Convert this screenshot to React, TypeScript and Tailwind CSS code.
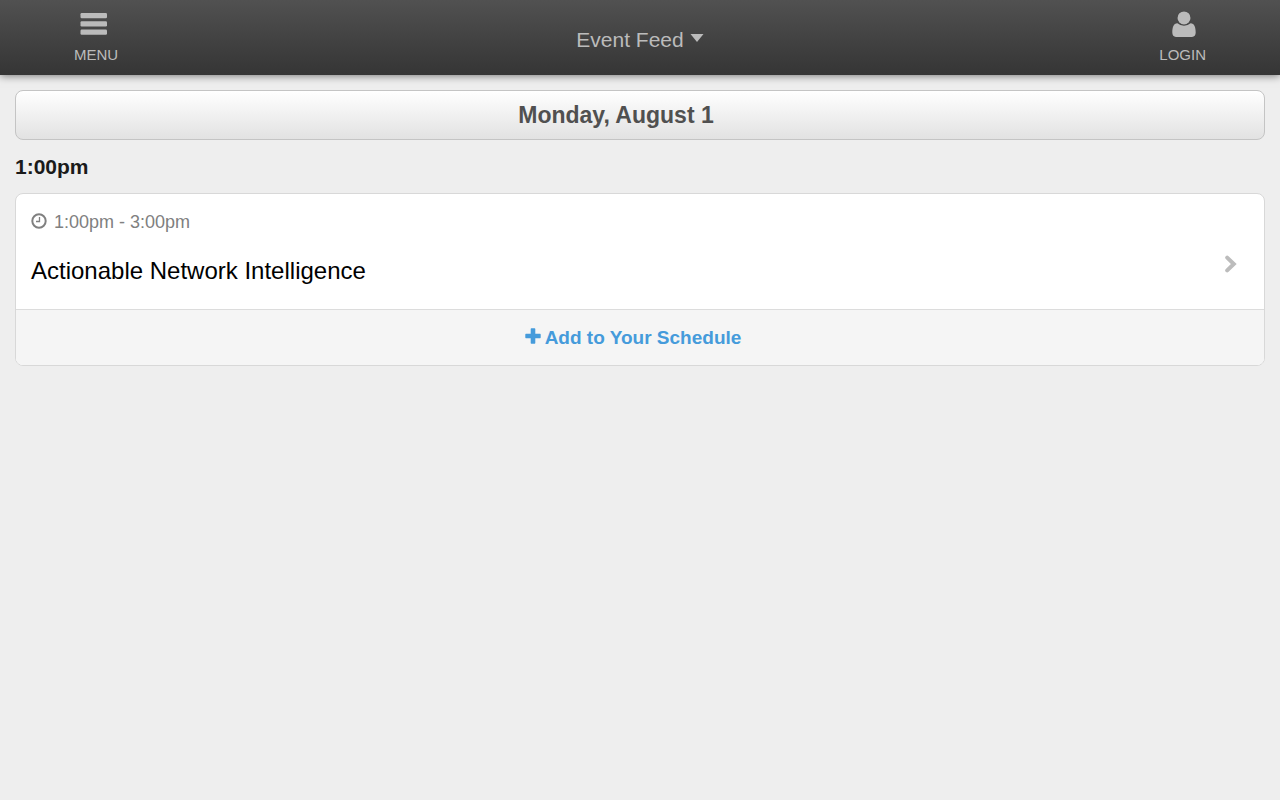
import React from "react";

function BarsIcon() {
  return (
    <svg width="28" height="24" viewBox="0 0 28 24" fill="currentColor" aria-hidden="true">
      <rect x="0.5" y="1" width="26.5" height="5.2" rx="1.2" />
      <rect x="0.5" y="9.3" width="26.5" height="5.2" rx="1.2" />
      <rect x="0.5" y="17.6" width="26.5" height="5.2" rx="1.2" />
    </svg>
  );
}

function UserIcon() {
  return (
    <svg width="24" height="27" viewBox="0 0 24 27" fill="currentColor" aria-hidden="true">
      <path d="M5.4 12.3Q8 14.7 12 14.7T18.6 12.3C22.4 12.3 23.7 16.5 23.7 21.500C23.7 24.300 22.4 25.9 20 25.9H4C1.6 25.9 0.3 24.300 0.3 21.500C0.3 16.5 1.6 12.3 5.4 12.3Z" />
      <circle cx="12" cy="7" r="7" fill="#474747" />
      <circle cx="12" cy="6.900" r="6.500" />
    </svg>
  );
}

function ClockIcon() {
  return (
    <svg width="16" height="16" viewBox="0 0 16 16" fill="none" stroke="currentColor" aria-hidden="true">
      <circle cx="8" cy="8" r="6.700" strokeWidth="2" />
      <path d="M8.500 4V8.500H5" strokeWidth="1.300" />
    </svg>
  );
}

function ChevronIcon() {
  return (
    <svg
      width="14"
      height="18"
      viewBox="0 0 14 18"
      fill="none"
      stroke="currentColor"
      strokeWidth="4"
      strokeLinecap="round"
      aria-hidden="true"
    >
      <path d="M3.200 2.600L9.800 9L3.200 15.400" />
    </svg>
  );
}

function PlusIcon() {
  return (
    <svg width="16" height="16" viewBox="0 0 16 16" fill="currentColor" aria-hidden="true">
      <path d="M6.400 0.300H9.600Q10.300 0.300 10.300 1V5.700H15Q15.700 5.700 15.700 6.400V9.600Q15.700 10.300 15 10.300H10.300V15Q10.300 15.700 9.600 15.700H6.400Q5.700 15.700 5.700 15V10.300H1Q0.300 10.300 0.300 9.600V6.400Q0.300 5.700 1 5.700H5.700V1Q5.700 0.300 6.400 0.300Z" />
    </svg>
  );
}

export default function App() {
  return (
    <div className="min-h-screen bg-[#eeeeee] font-['Liberation_Sans',Arial,sans-serif] text-black">
      <header className="flex h-[75px] items-start justify-between bg-linear-to-b from-[#515151] to-[#353535] px-[74px] text-[#bbbbbb] shadow-[0_1px_8px_rgba(0,0,0,0.5)] [text-shadow:0_-1px_0_rgba(0,0,0,0.6)]">
        <div className="flex flex-1 justify-start">
          <button className="flex flex-col items-start pt-3 text-[15px] leading-5">
            <span className="pl-1.5">
              <BarsIcon />
            </span>
            <span className="mt-[9px]">MENU</span>
          </button>
        </div>
        <button className="flex items-center gap-1.5 self-center pt-1 text-[21px] leading-6">
          Event Feed
          <svg width="14" height="8" viewBox="0 0 14 8" fill="currentColor" aria-hidden="true" className="mb-1">
            <path d="M0.500 0H13.500L7 8Z" />
          </svg>
        </button>
        <div className="flex flex-1 justify-end">
          <button className="flex flex-col items-center pt-[11px] text-[15px] leading-5">
            <span className="pl-0.5">
              <UserIcon />
            </span>
            <span className="mt-[7px]">LOGIN</span>
          </button>
        </div>
      </header>

      <main className="px-[15px] pt-[15px]">
        <h1 className="rounded-lg border border-[#c4c4c4] bg-linear-to-b from-white to-[#e2e2e2] py-3 pr-12 text-center text-[23px] leading-6 font-bold text-[#505050]">
          Monday, August 1
        </h1>
        <h2 className="pt-[15px] pb-3.5 text-[21px] leading-6 font-bold text-[#1a1a1a]">1:00pm</h2>

        <section className="overflow-hidden rounded-lg border border-[#d8d8d8] bg-white">
          <a href="#session" className="flex items-end justify-between pt-4 pr-[26px] pb-6 pl-[15px]">
            <div>
              <p className="flex items-center gap-[7px] text-[18px] leading-6 text-[#808080]">
                <span className="pb-0.5">
                  <ClockIcon />
                </span>
                1:00pm - 3:00pm
              </p>
              <h3 className="mt-[23px] text-[24px] leading-7">Actionable Network Intelligence</h3>
            </div>
            <span className="pb-3 text-[#bcbcbc]">
              <ChevronIcon />
            </span>
          </a>
          <button className="flex w-full items-center justify-center gap-1 border-t border-[#dcdcdc] bg-[#f5f5f5] pt-4 pb-[15px] pr-[14px] text-[19px] leading-6 font-bold text-[#459bdb]">
            <span className="pb-1">
              <PlusIcon />
            </span>
            Add to Your Schedule
          </button>
        </section>
      </main>
    </div>
  );
}
